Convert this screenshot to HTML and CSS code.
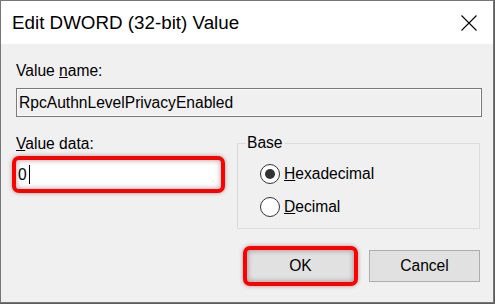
FILE: index.html
```html
<!DOCTYPE html>
<html>
<head>
<meta charset="utf-8">
<link rel="stylesheet" href="styles.css">
</head>
<body>
<div class="window">
  <div class="titlebar">
    <span class="title">Edit DWORD (32-bit) Value</span>
    <svg class="close" width="16" height="16" viewBox="0 0 16 16"><path d="M0.5 0.5 L15.5 15.5 M15.5 0.5 L0.5 15.5" stroke="#000" stroke-width="1.1" fill="none"/></svg>
  </div>
  <div class="content">
    <div class="label name-label">Value <u>n</u>ame:</div>
    <div class="namefield">RpcAuthnLevelPrivacyEnabled</div>
    <div class="row">
      <div class="left">
        <div class="label data-label"><u>V</u>alue data:</div>
        <div class="highlight input-box"><span class="val">0</span><span class="caret"></span></div>
      </div>
      <fieldset class="base">
        <legend>Base</legend>
        <div class="radio-row"><span class="radio checked"></span><span><u>H</u>exadecimal</span></div>
        <div class="radio-row"><span class="radio"></span><span><u>D</u>ecimal</span></div>
      </fieldset>
    </div>
    <div class="buttons">
      <div class="highlight ok-btn">OK</div>
      <div class="btn">Cancel</div>
    </div>
  </div>
</div>
</body>
</html>
```
FILE: styles.css
```css
html, body {
  margin: 0;
  padding: 0;
  background: #5c5c5c;
}
body {
  font-family: "Liberation Sans", Arial, sans-serif;
  color: #000;
  width: 495px;
  height: 304px;
  overflow: hidden;
}
.window {
  box-sizing: border-box;
  width: 494px;
  height: 303px;
  border: 1px solid #767676;
  background: #f0f0f0;
}
.titlebar {
  height: 43px;
  background: #fff;
  display: flex;
  align-items: center;
  justify-content: space-between;
  padding: 0 16px 0 11px;
}
.title {
  font-size: 18.8px;
  line-height: 22px;
}
.close {
  display: block;
  margin-top: 1px;
}
.content {
  padding: 0 12px 0 15px;
}
.label {
  font-size: 15.6px;
  line-height: 20px;
}
.name-label {
  padding-top: 17px;
}
.namefield {
  margin-top: 7px;
  box-sizing: border-box;
  width: 466px;
  height: 29px;
  border: 1px solid #7a7a7a;
  box-shadow: inset 0 0 0 1px #fbfbfb;
  background: #f0f0f0;
  font-size: 15.6px;
  line-height: 27px;
  padding-left: 2px;
}
.row {
  display: flex;
  margin-top: 16px;
}
.left {
  width: 221px;
}
.data-label {
  margin-top: 1px;
}
.highlight {
  box-sizing: border-box;
  border: 4px solid #ff0000;
  border-radius: 7px;
  box-shadow: 0 0 4px rgba(0,0,0,0.35), inset 0 0 5px 1px rgba(0,0,0,0.28);
}
.input-box {
  margin-top: 2px;
  margin-left: -4px;
  width: 213px;
  height: 37px;
  background: #fff;
  display: flex;
  align-items: center;
  padding-left: 2px;
  font-size: 15.6px;
}
.caret {
  display: inline-block;
  width: 1px;
  height: 19px;
  background: #000;
  margin-left: 2px;
}
.base {
  box-sizing: border-box;
  width: 243px;
  height: 96px;
  margin: 0;
  border: 1px solid #dcdcdc;
  padding: 0 0 0 8px;
  font-size: 15.6px;
}
.base legend {
  padding: 0 1px;
  line-height: 20px;
}
.radio-row {
  display: flex;
  align-items: center;
  height: 33px;
  padding-left: 14px;
  line-height: 20px;
}
.radio-row:first-of-type {
  margin-top: 4px;
}
.radio {
  box-sizing: border-box;
  width: 20px;
  height: 20px;
  border: 1px solid #333;
  border-radius: 50%;
  background: #fff;
  margin-right: 4px;
  display: flex;
  align-items: center;
  justify-content: center;
}
.radio.checked::after {
  content: "";
  width: 10px;
  height: 10px;
  border-radius: 50%;
  background: #333;
}
.buttons {
  display: flex;
  justify-content: flex-end;
  align-items: center;
  margin-top: 17px;
  padding-right: 1px;
  gap: 11px;
}
.ok-btn {
  width: 115px;
  height: 40px;
  background: #e1e1e1;
  display: flex;
  align-items: center;
  justify-content: center;
  font-size: 15.6px;
}
.btn {
  box-sizing: border-box;
  width: 111px;
  height: 32px;
  border: 1px solid #adadad;
  background: #e1e1e1;
  display: flex;
  align-items: center;
  justify-content: center;
  font-size: 15.6px;
}
```
